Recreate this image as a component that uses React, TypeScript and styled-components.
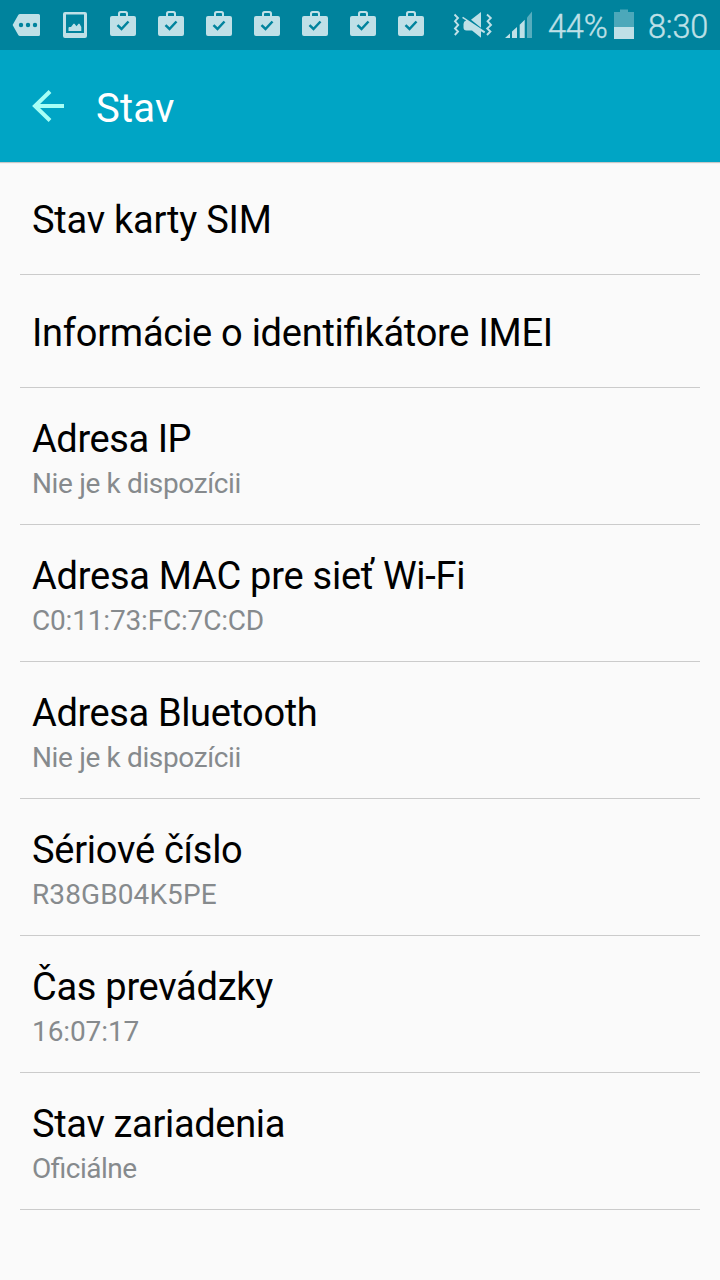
import React from 'react';
import styled, { createGlobalStyle } from 'styled-components';

const GlobalStyle = createGlobalStyle`
  * { box-sizing: border-box; }
  body {
    margin: 0;
    background: #fafafa;
    font-family: Roboto, "Liberation Sans", sans-serif;
  }
`;

const Screen = styled.div`
  display: flex;
  flex-direction: column;
  width: 720px;
  height: 1280px;
  overflow: hidden;
  background: #fafafa;
`;

const StatusBar = styled.div`
  display: flex;
  justify-content: space-between;
  height: 50px;
  background: #00839d;
  color: #bfe0e7;
`;

const Group = styled.div`
  display: flex;
`;

const StatusIcon = styled.svg`
  display: block;
  flex: none;
  height: 50px;
  fill: currentColor;
`;

const StatusText = styled.span<{ $width: number }>`
  width: ${(p) => p.$width}px;
  font-size: 32.5px;
  font-weight: 300;
  line-height: 54px;
  letter-spacing: -0.2px;
  -webkit-text-stroke: 0.4px currentColor;
  white-space: nowrap;
`;

const Header = styled.header`
  display: flex;
  align-items: center;
  height: 112px;
  padding-left: 32px;
  background: #00a5c5;
  box-shadow: 0 1px 1px rgba(0, 0, 0, 0.2);
`;

const BackIcon = styled.svg`
  display: block;
  width: 64px;
  height: 112px;
  fill: none;
  stroke: #a7fff6;
  stroke-width: 4;
`;

const Heading = styled.h1`
  margin: 0;
  padding-top: 5px;
  color: #fff;
  font-size: 40px;
  font-weight: 400;
  line-height: 49px;
  letter-spacing: 0.2px;
`;

const List = styled.main`
  display: flex;
  flex-direction: column;
  padding: 0 20px;
`;

const Item = styled.section<{ $single: boolean }>`
  height: ${(p) => (p.$single ? 113 : 137)}px;
  padding: ${(p) => (p.$single ? 35 : 28)}px 12px 0;
  border-bottom: 1px solid #cbcbcb;
`;

const Line = styled.div<{ $tracking: number }>`
  letter-spacing: ${(p) => p.$tracking}px;
  font-feature-settings: "liga" 1;
  font-weight: 400;
  white-space: nowrap;
`;

const Title = styled(Line)`
  color: #000;
  font-size: 38px;
  line-height: 46px;
`;

const Value = styled(Line)`
  padding-top: 5px;
  color: #868a8d;
  font-size: 28px;
  line-height: 34px;
`;

type Text = { text: string; tracking: number };

const items: { title: Text; value?: Text }[] = [
  { title: { text: 'Stav karty SIM', tracking: -0.23 } },
  { title: { text: 'Informácie o identifikátore IMEI', tracking: -0.25 } },
  {
    title: { text: 'Adresa IP', tracking: -0.42 },
    value: { text: 'Nie je k dispozícii', tracking: -0.36 },
  },
  {
    title: { text: 'Adresa MAC pre sieť Wi-Fi', tracking: -0.25 },
    value: { text: 'C0:11:73:FC:7C:CD', tracking: -0.18 },
  },
  {
    title: { text: 'Adresa Bluetooth', tracking: -0.38 },
    value: { text: 'Nie je k dispozícii', tracking: -0.36 },
  },
  {
    title: { text: 'Sériové číslo', tracking: -0.25 },
    value: { text: 'R38GB04K5PE', tracking: 0.1 },
  },
  {
    title: { text: 'Čas prevádzky', tracking: -0.28 },
    value: { text: '16:07:17', tracking: -0.1 },
  },
  {
    title: { text: 'Stav zariadenia', tracking: -0.33 },
    value: { text: 'Oficiálne', tracking: -0.5 },
  },
];

const MoreIcon = () => (
  <StatusIcon width="51" viewBox="0 0 51 50">
    <path
      fillRule="evenodd"
      d="M20 14h18.500a1.500 1.500 0 0 1 1.500 1.500v19a1.500 1.500 0 0 1-1.500 1.500H20q-1 0-1.600-.8L12.600 25l5.800-10.200q.6-.8 1.600-.8ZM21 22.800a2.200 2.200 0 1 0 0 4.400a2.200 2.200 0 1 0 0-4.400ZM28 22.800a2.200 2.200 0 1 0 0 4.400a2.200 2.200 0 1 0 0-4.400ZM35 22.800a2.200 2.200 0 1 0 0 4.400a2.200 2.200 0 1 0 0-4.400Z"
    />
  </StatusIcon>
);

const PictureIcon = () => (
  <StatusIcon width="48" viewBox="51 0 48 50">
    <path
      fillRule="evenodd"
      d="M65 12h20a2 2 0 0 1 2 2v22a2 2 0 0 1-2 2H65a2 2 0 0 1-2-2V14a2 2 0 0 1 2-2ZM66 14.500V33h18V14.500Z"
    />
    <path d="M68.500 31v-3q0-1 1-1h1.500l2.500-3.300h1l2 2.500 2-2.500h1l1.800 3.300v4Z" />
  </StatusIcon>
);

const BriefcaseIcon = () => (
  <StatusIcon width="48" viewBox="99 0 48 50">
    <path
      fillRule="evenodd"
      d="M112 16h6v-2.500q0-2.500 2.500-2.500h5q2.500 0 2.500 2.500V16h6a2 2 0 0 1 2 2v16a2 2 0 0 1-2 2h-22a2 2 0 0 1-2-2V18a2 2 0 0 1 2-2ZM120 16h6v-2q0-1-1-1h-4q-1 0-1 1Z"
    />
    <path d="m117.500 25.200 4 3.800 7-7.500" fill="none" stroke="#00839d" strokeWidth="2.500" />
  </StatusIcon>
);

const MutedVibrateIcon = () => (
  <StatusIcon width="51" viewBox="451 0 51 50">
    <path d="M471 19.800 481 12v15.800Z" />
    <path d="m463 16.800 22.200 14.800-1 1.600-3.200-1.900v6.500l-9-7.300h-5.500q-3 0-3-3V24q0-2.600 2.600-3.400l-4-2.500Z" />
    <path
      d="M454.500 14.500l3.500 3.500-3 3.200 3.200 3.800-3.200 3.500 3 3-3.200 3.500M487 14.500l3.800 3.500-3.200 3.200 3.400 3.800-3.800 3.500 3.200 3-3.400 3.500"
      fill="none"
      stroke="currentColor"
      strokeWidth="1.900"
    />
  </StatusIcon>
);

const SignalIcon = () => (
  <StatusIcon width="46" viewBox="502 0 46 50">
    <path d="M505 38l5-4.500V38ZM512 31.500l5-4.500v11h-5ZM519.700 24.700l5-5V38h-5Z" />
    <path d="M527 17.500l5-6V38h-5Z" opacity=".45" />
  </StatusIcon>
);

const BatteryIcon = () => (
  <StatusIcon width="34" viewBox="614 0 34 50">
    <path d="M614 12h6V9.500h8V12h6v15h-20Z" opacity=".4" />
    <path d="M614 27h20v12h-20Z" />
  </StatusIcon>
);

export default function App() {
  return (
    <Screen>
      <GlobalStyle />
      <StatusBar>
        <Group>
          <MoreIcon />
          <PictureIcon />
          {Array.from({ length: 7 }, (_, i) => (
            <BriefcaseIcon key={i} />
          ))}
        </Group>
        <Group>
          <MutedVibrateIcon />
          <SignalIcon />
          <StatusText $width={66}>44%</StatusText>
          <BatteryIcon />
          <StatusText $width={72}>8:30</StatusText>
        </Group>
      </StatusBar>
      <Header>
        <BackIcon viewBox="32 50 64 112">
          <path d="M50 91.500 35 106l15 14.500M35 106h29" />
        </BackIcon>
        <Heading>Stav</Heading>
      </Header>
      <List>
        {items.map(({ title, value }) => (
          <Item key={title.text} $single={!value}>
            <Title $tracking={title.tracking}>{title.text}</Title>
            {value && <Value $tracking={value.tracking}>{value.text}</Value>}
          </Item>
        ))}
      </List>
    </Screen>
  );
}
